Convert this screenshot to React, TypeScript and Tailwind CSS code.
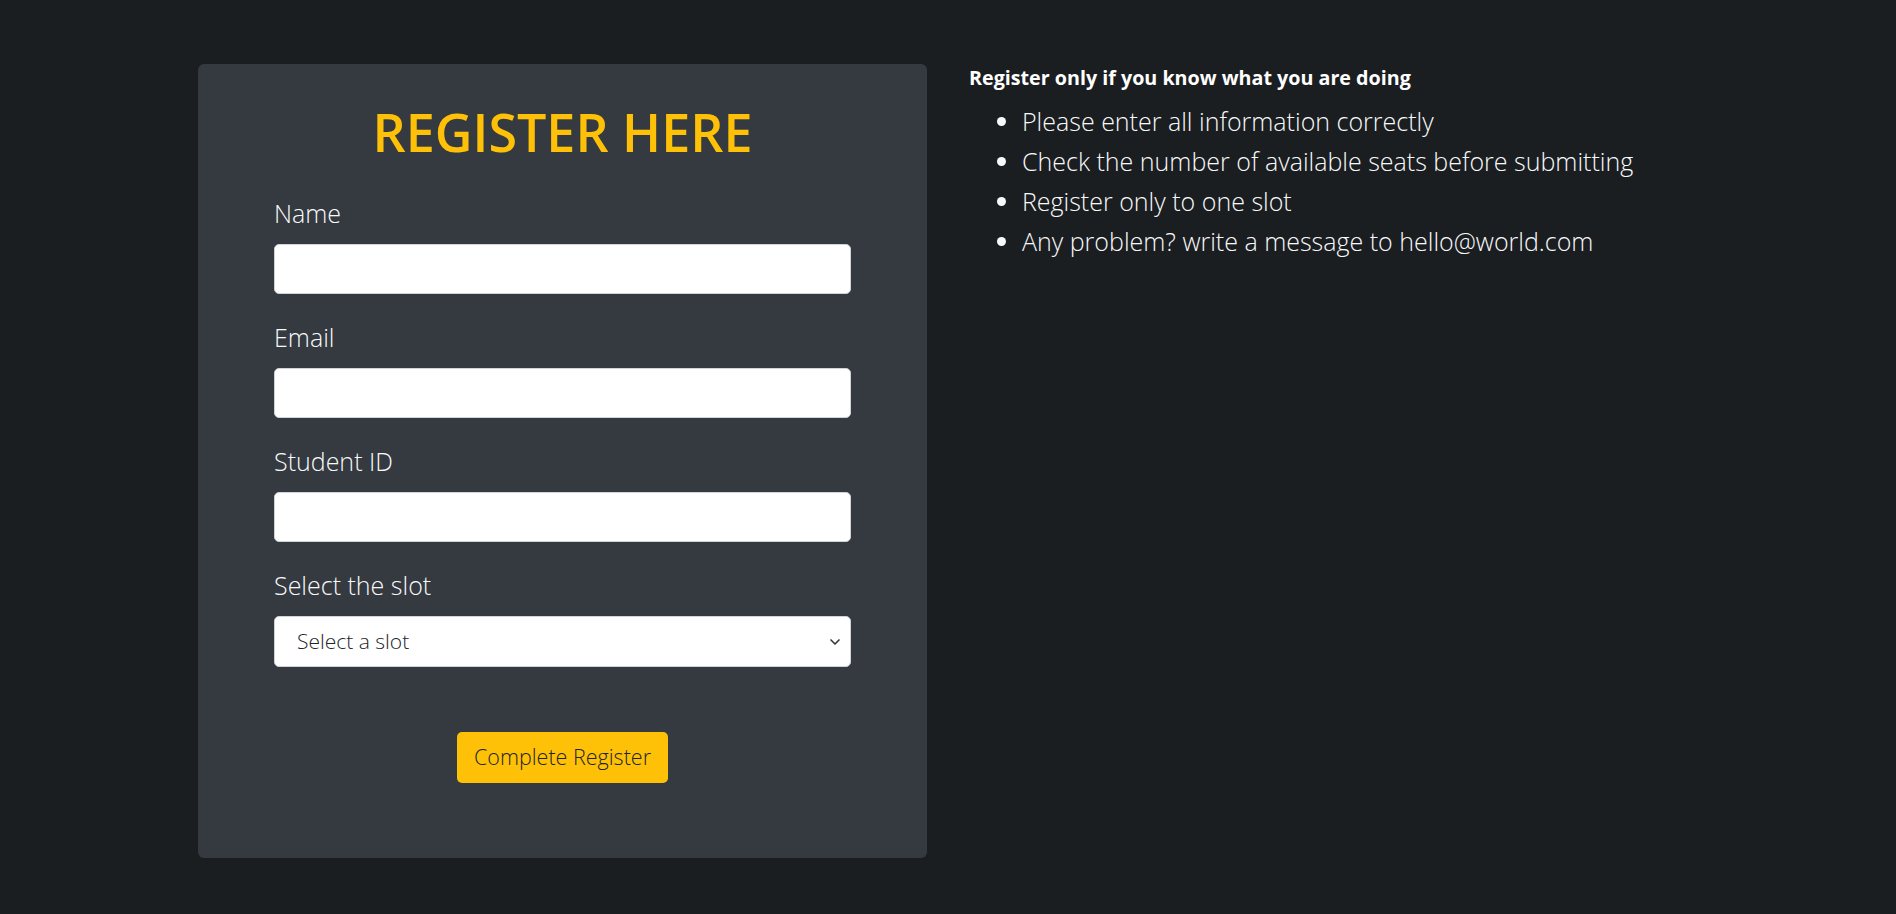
import { ChevronDown } from "lucide-react";

const fields = ["Name", "Email", "Student ID"];

const notes = [
  "Please enter all information correctly",
  "Check the number of available seats before submitting",
  "Register only to one slot",
  "Any problem? write a message to hello@world.com",
];

export default function App() {
  return (
    <div className="flex min-h-screen items-start gap-[42px] bg-[#1b1e21] pl-[198px] pt-[64px] font-['Open_Sans',sans-serif] text-white">
      {/* Register card */}
      <div className="w-[729px] rounded-[6px] bg-[#343a40] px-[76px] pb-[75px] pt-[36px]">
        <h1 className="mb-[30px] text-center text-[52px] font-semibold leading-[64px] text-[#ffc107]">
          REGISTER HERE
        </h1>

        <form onSubmit={(e) => e.preventDefault()}>
          {fields.map((f) => (
            <div key={f} className="mb-[24px]">
              <label className="mb-[12px] block text-[25px] font-light leading-[38px] text-[#f8f9fa]">
                {f}
              </label>
              <input
                type="text"
                className="block h-[50px] w-full rounded-[5px] border border-[#ced4da] bg-white px-[15px] text-[20px] text-[#212529] outline-none"
              />
            </div>
          ))}

          <div>
            <label className="mb-[12px] block text-[25px] font-light leading-[38px] text-[#f8f9fa]">
              Select the slot
            </label>
            <div className="relative">
              <select
                defaultValue=""
                className="block h-[51px] w-full appearance-none rounded-[5px] border border-[#ced4da] bg-white pl-[22px] text-[21px] font-light text-[#212529] outline-none"
              >
                <option value="">Select a slot</option>
              </select>
              <ChevronDown
                className="pointer-events-none absolute right-[8px] top-1/2 h-[16px] w-[16px] -translate-y-1/2 text-[#343a40]"
                strokeWidth={2.5}
              />
            </div>
          </div>

          <div className="mt-[65px] flex justify-center">
            <button
              type="submit"
              className="h-[51px] rounded-[5px] bg-[#ffc107] px-[17px] text-[21.5px] font-light text-[#212529]"
            >
              Complete Register
            </button>
          </div>
        </form>
      </div>

      {/* Notes */}
      <div className="-mt-[1px]">
        <p className="text-[19.7px] font-bold leading-[30px] text-white">
          Register only if you know what you are doing
        </p>
        <ul className="mt-[8px] list-disc pl-[53px] text-[25px] font-light leading-[40px] text-[#f8f9fa]">
          {notes.map((n) => (
            <li key={n}>{n}</li>
          ))}
        </ul>
      </div>
    </div>
  );
}
